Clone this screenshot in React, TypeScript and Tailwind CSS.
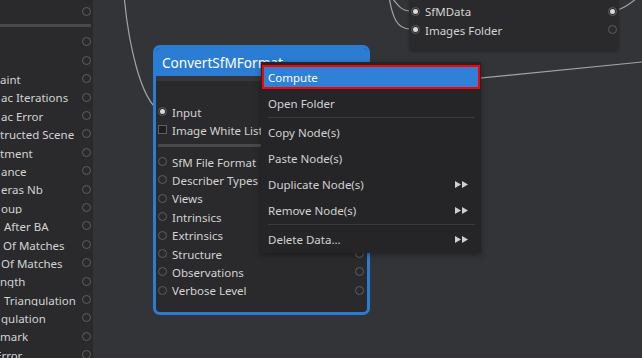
import React from "react";

const FONT = { fontFamily: '"Noto Sans", "Open Sans", sans-serif' };

function Port({ filled = false }: { filled?: boolean }) {
  return (
    <div className="w-[9px] h-[9px] shrink-0 rounded-full border border-[#5e5e61] flex items-center justify-center">
      {filled && <div className="w-[5px] h-[5px] rounded-full bg-[#d9d9d9]" />}
    </div>
  );
}

function SquarePort() {
  return <div className="w-[9px] h-[9px] shrink-0 border border-[#5e5e61] bg-[#1f1f21]" />;
}

const leftRows: { label: string; ml: number }[] = [
  { label: "aint", ml: 0 },
  { label: "ac Iterations", ml: 1 },
  { label: "ac Error", ml: 1 },
  { label: "tructed Scene", ml: 0 },
  { label: "tment", ml: 0 },
  { label: "ance", ml: 1 },
  { label: "eras Nb", ml: 1 },
  { label: "oup", ml: 1 },
  { label: "After BA", ml: 4 },
  { label: "Of Matches", ml: 3 },
  { label: "Of Matches", ml: 1 },
  { label: "ngth", ml: 0 },
  { label: "Triangulation", ml: 4 },
  { label: "gulation", ml: 1 },
  { label: "mark", ml: 0 },
  { label: "Error", ml: -5 },
];

function LeftRow({ label, ml }: { label?: string; ml?: number }) {
  return (
    <div className="h-[18.4px] flex items-center pr-[2px]">
      <div className="flex-1 mt-[2px] overflow-hidden whitespace-nowrap text-[11.5px] leading-none text-[#d3d3d3]">
        {label && <span className="inline-block" style={{ marginLeft: ml }}>{label}</span>}
      </div>
      <Port />
    </div>
  );
}

function NodeRow({ label, left, right = true }: { label: string; left: "circle" | "filled" | "square" | "none"; right?: boolean }) {
  return (
    <div className="h-[18.4px] flex items-center pl-[2px] pr-[3px]">
      <div className="w-[9px] flex items-center">
        {left === "circle" && <Port />}
        {left === "filled" && <Port filled />}
        {left === "square" && <SquarePort />}
      </div>
      <div className="flex-1 ml-[5px] mt-[2px] whitespace-nowrap text-[11.5px] leading-none text-[#d3d3d3]">{label}</div>
      {right ? <Port /> : <div className="w-[9px]" />}
    </div>
  );
}

function Arrows() {
  return (
    <svg width="13" height="7" viewBox="0 0 13 7">
      <polygon points="0,0 6,3.5 0,7" fill="#cfcfcf" />
      <polygon points="7,0 13,3.5 7,7" fill="#cfcfcf" />
    </svg>
  );
}

function MenuItem({ label, arrow = false }: { label: string; arrow?: boolean }) {
  return (
    <div className="h-[26px] flex items-center justify-between pl-[7px] pr-[13px] text-[11.5px] leading-none text-[#d2d2d2]">
      <span className="mt-[2px]">{label}</span>
      {arrow && <Arrows />}
    </div>
  );
}

function MenuSep() {
  return (
    <div className="h-[3px] flex items-center ml-[7px] mr-[6px]">
      <div className="h-[1px] w-full bg-[#3c3c3f]" />
    </div>
  );
}

export default function App() {
  return (
    <div className="relative w-[642px] h-[358px] overflow-hidden bg-[#333438]" style={FONT}>
      {/* edges */}
      <svg className="absolute inset-0" width="642" height="358">
        <g fill="none" stroke="#a3a3a3" strokeWidth="1.2">
          <path d="M 124 -5 C 128 40, 140 100, 160 111" />
          <path d="M 388 -10 C 392 20, 398 29, 410 29" />
          <path d="M 390 -5 C 398 6, 402 11, 410 11" />
          <path d="M 617 10 C 625 8, 630 4, 637 -2" />
          <path d="M 360 90 L 645 61.7" />
        </g>
      </svg>

      {/* left node (partially off-screen) */}
      <div className="absolute left-0 top-0 w-[93px] h-[358px] bg-[#2a2a2c] pt-[2px]">
        <LeftRow />
        <div className="h-[12.4px] pt-[4px]">
          <div className="h-[3px] w-[91px] bg-[#48484b]" />
        </div>
        <LeftRow />
        <LeftRow />
        {leftRows.map((r, i) => (
          <LeftRow key={i} label={r.label} ml={r.ml} />
        ))}
      </div>

      {/* top right node */}
      <div className="absolute left-[409px] top-0 w-[210px] h-[51px] bg-[#2a2a2c] rounded-b-[4px] pt-[2px] shadow-[0_1px_3px_rgba(0,0,0,0.25)]">
        <div className="h-[18.4px] flex items-center pl-[1.5px] pr-[2px]">
          <Port filled />
          <div className="flex-1 ml-[5.5px] mt-[2px] text-[11.5px] leading-none text-[#d3d3d3]">SfMData</div>
          <Port filled />
        </div>
        <div className="h-[18.4px] flex items-center pl-[1.5px] pr-[2px]">
          <Port filled />
          <div className="flex-1 ml-[5.5px] mt-[2px] text-[11.5px] leading-none text-[#d3d3d3]">Images Folder</div>
          <Port />
        </div>
      </div>

      {/* ConvertSfMFormat node */}
      <div className="absolute left-[153px] top-[45px] w-[217px] h-[270px] rounded-[7px] border-[3px] border-[#2b7cd3] bg-[#2a2a2c] overflow-hidden">
        <div className="h-[28px] bg-[#2b7cd3] flex items-center pl-[6px] pt-[2px]">
          <span className="text-[13.6px] leading-none text-white whitespace-nowrap">ConvertSfMFormat</span>
        </div>
        <div className="h-[5px] bg-[#363638]" />
        <div className="pt-[3px]">
          <NodeRow label="" left="none" />
          <NodeRow label="Input" left="filled" />
          <NodeRow label="Image White List" left="square" />
          <div className="h-[13.1px] pt-[4.8px] pl-[2px] pr-[2px]">
            <div className="h-[3px] bg-[#48484b]" />
          </div>
          <NodeRow label="SfM File Format" left="circle" />
          <NodeRow label="Describer Types" left="circle" />
          <NodeRow label="Views" left="circle" />
          <NodeRow label="Intrinsics" left="circle" />
          <NodeRow label="Extrinsics" left="circle" />
          <NodeRow label="Structure" left="circle" />
          <NodeRow label="Observations" left="circle" />
          <NodeRow label="Verbose Level" left="circle" />
        </div>
      </div>

      {/* context menu */}
      <div className="absolute left-[261px] top-[62px] w-[220px] bg-[#252527] pt-[2px] pb-[1px] shadow-[0_2px_6px_rgba(0,0,0,0.35)]">
        <div className="h-[26px] py-[1px] px-[1px]">
          <div className="h-[24px] border-2 border-[#ff0000] bg-[#2f80d9] flex items-center pl-[4px] text-[11.5px] leading-none text-white">
            <span className="mt-[2px]">Compute</span>
          </div>
        </div>
        <MenuItem label="Open Folder" />
        <MenuSep />
        <MenuItem label="Copy Node(s)" />
        <MenuItem label="Paste Node(s)" />
        <MenuItem label="Duplicate Node(s)" arrow />
        <MenuItem label="Remove Node(s)" arrow />
        <MenuSep />
        <MenuItem label="Delete Data..." arrow />
      </div>
    </div>
  );
}
